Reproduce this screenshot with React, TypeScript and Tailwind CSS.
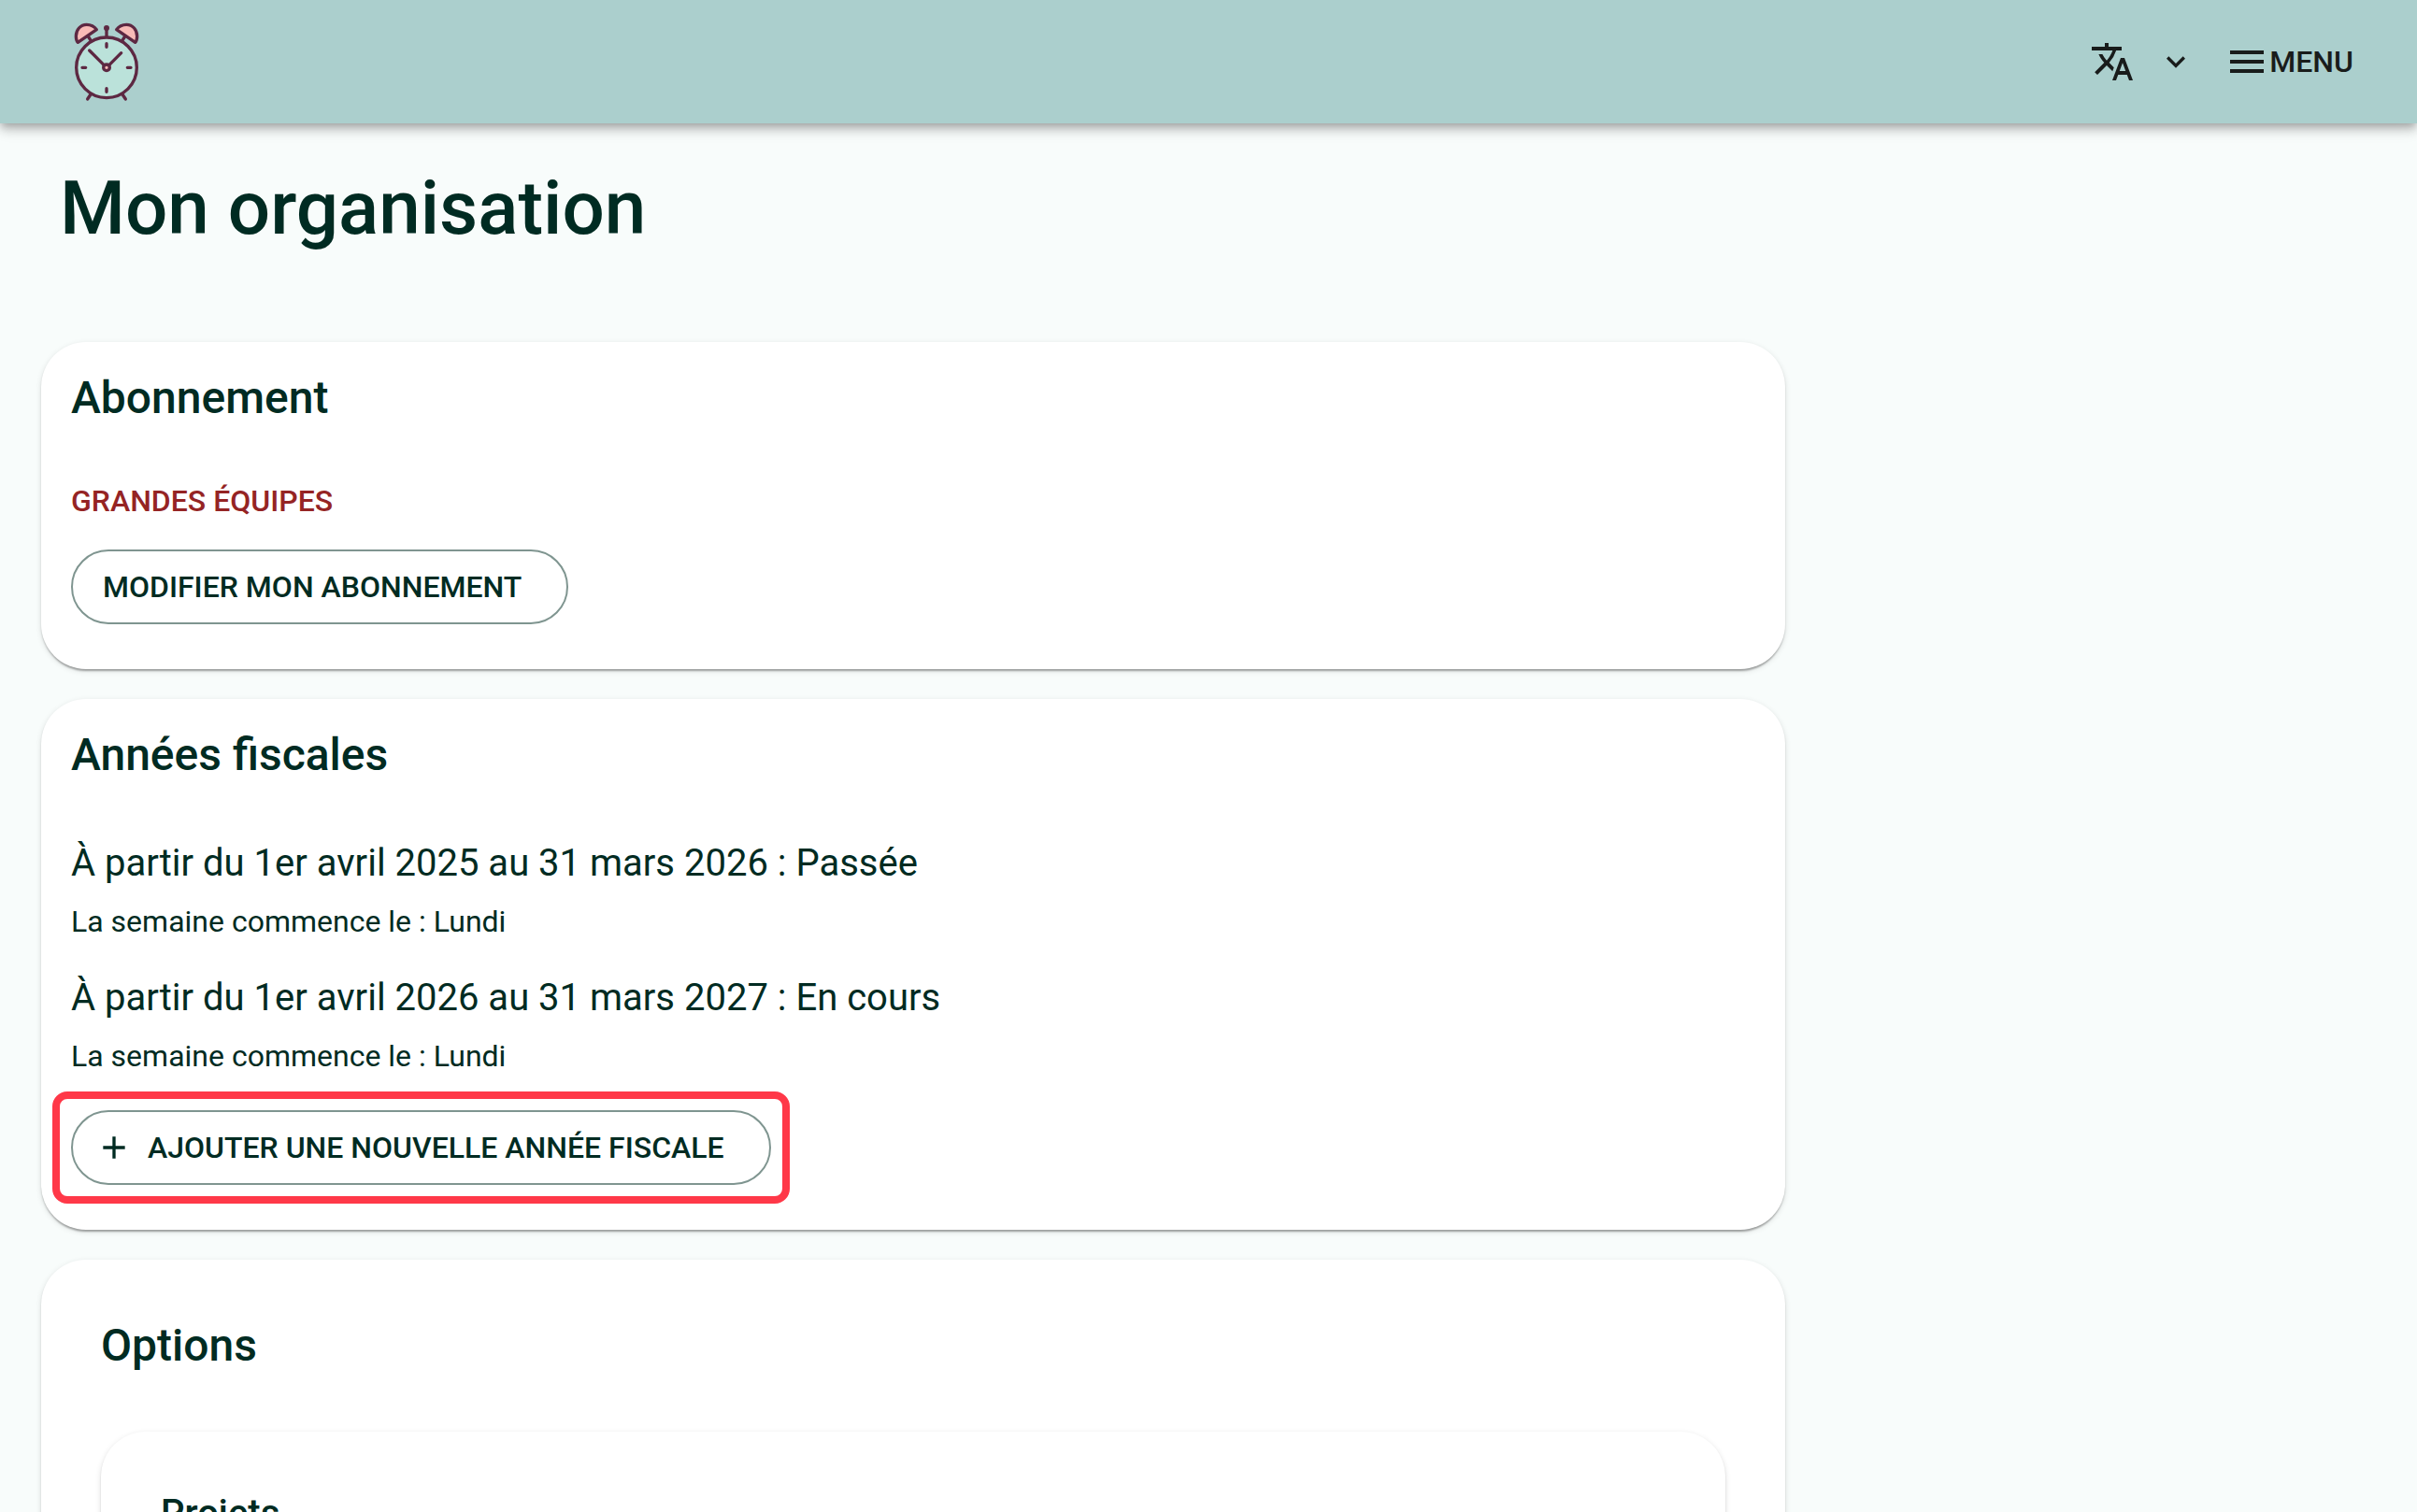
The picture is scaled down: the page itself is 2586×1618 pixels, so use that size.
import type { ReactNode } from "react";
import { MdAdd, MdExpandMore, MdMenu, MdTranslate } from "react-icons/md";

function ClockLogo() {
  return (
    <svg viewBox="108 60 228 276" className="h-[92px] w-[76px]" fill="none" stroke="#5d2842" strokeWidth="10" strokeLinecap="round" strokeLinejoin="round" aria-hidden="true">
      <path d="M163 117 172 131M281 117 272 131M171 303 161 318M273 303 283 318" />
      <path d="M124 116C124 96 138 79 158 79C172 79 183 85 190 95L130 136Q124 130 124 116Z" fill="#f9bbb7" />
      <path d="M320 116C320 96 306 79 286 79C272 79 261 85 254 95L314 136Q320 130 320 116Z" fill="#f9bbb7" />
      <path d="M222 91V118" />
      <circle cx="222" cy="90" r="5" fill="#5d2842" strokeWidth="8" />
      <circle cx="222" cy="217" r="97" fill="#bbe2da" />
      <path d="M222 140V151M222 284V295M144 217H155M289 217H300" />
      <path d="M167 162 213 208M269 170 231 208" />
      <circle cx="222" cy="217" r="10" fill="#f9bbb7" />
    </svg>
  );
}

function Card({ children, className }: { children: ReactNode; className: string }) {
  return (
    <section className={`rounded-[48px] bg-white shadow-[0_4px_2px_-2px_rgba(0,0,0,0.2),0_2px_2px_0_rgba(0,0,0,0.14),0_2px_6px_0_rgba(0,0,0,0.12)] ${className}`}>
      {children}
    </section>
  );
}

function OutlinedButton({ children }: { children: ReactNode }) {
  return (
    <button type="button" className="flex h-20 items-center gap-4 rounded-full border-2 border-[#7f9590] pr-12 pl-8 text-[32px] leading-[48px] font-medium uppercase">
      {children}
    </button>
  );
}

const fiscalYears = [
  { label: "À partir du 1er avril 2025 au 31 mars 2026 : Passée", week: "La semaine commence le : Lundi" },
  { label: "À partir du 1er avril 2026 au 31 mars 2027 : En cours", week: "La semaine commence le : Lundi" },
];

export default function App() {
  return (
    <div className="h-screen overflow-hidden bg-[#f8fcfb] font-['Roboto',sans-serif] text-[#002b22]">
      <header className="relative z-10 flex h-[132px] items-center justify-between bg-[#abcfcd] pr-17 pl-[76px] text-[#191c1b] shadow-[0_4px_8px_-2px_rgba(0,0,0,0.2),0_8px_10px_0_rgba(0,0,0,0.14),0_2px_20px_0_rgba(0,0,0,0.12)]">
        <a href="#" aria-label="Accueil">
          <ClockLogo />
        </a>
        <nav className="flex items-center gap-8">
          <button type="button" aria-label="Langue" className="flex items-center gap-6">
            <MdTranslate className="size-12" />
            <MdExpandMore className="size-10" />
          </button>
          <button type="button" className="flex items-center text-[32px] leading-[48px] font-medium">
            <MdMenu className="size-12" />
            MENU
          </button>
        </nav>
      </header>

      <main className="px-11">
        <h1 className="px-5 pt-11 pb-24 text-[80px] leading-[94px] font-medium">Mon organisation</h1>

        <div className="grid grid-cols-4 gap-8">
          <div className="col-span-3 flex flex-col gap-8">
            <Card className="px-8 pt-8 pb-12">
              <h2 className="mb-[58px] text-[48px] leading-[56px] font-medium">Abonnement</h2>
              <p className="mb-7 text-[32px] leading-[48px] font-medium text-[#952424] uppercase">Grandes équipes</p>
              <div className="flex">
                <OutlinedButton>Modifier mon abonnement</OutlinedButton>
              </div>
            </Card>

            <Card className="px-8 pt-8 pb-12">
              <h2 className="mb-[58px] text-[48px] leading-[56px] font-medium">Années fiscales</h2>
              <ul className="mb-1.5">
                {fiscalYears.map((year) => (
                  <li key={year.label} className="pb-7">
                    <p className="text-[40px] leading-[60px]">{year.label}</p>
                    <p className="pt-2 text-[32px] leading-[48px]">{year.week}</p>
                  </li>
                ))}
              </ul>
              <div className="flex">
                <div className="relative">
                  <OutlinedButton>
                    <MdAdd className="-ml-2 size-10" />
                    Ajouter une nouvelle année fiscale
                  </OutlinedButton>
                  <div className="pointer-events-none absolute -inset-5 rounded-2xl border-8 border-[#ff3848]" />
                </div>
              </div>
            </Card>

            <Card className="p-16">
              <h2 className="text-[48px] leading-[56px] font-medium">Options</h2>
              <Card className="mt-16 p-16">
                <h3 className="text-[40px] leading-[48px] font-medium">Projets</h3>
              </Card>
            </Card>
          </div>
        </div>
      </main>
    </div>
  );
}
